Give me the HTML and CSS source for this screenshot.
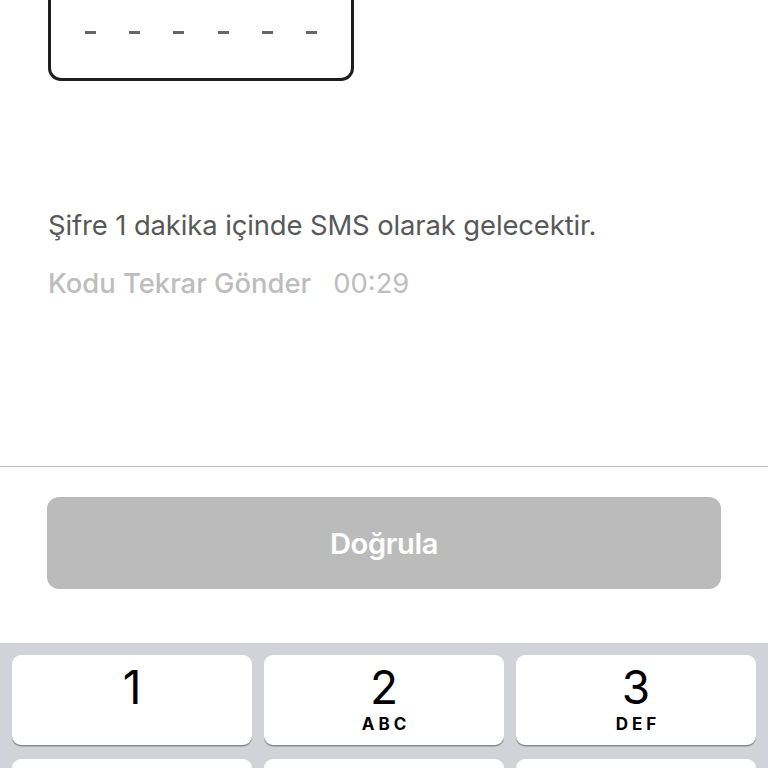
FILE: index.html
```html
<!DOCTYPE html>
<html lang="tr">
<head>
<meta charset="utf-8">
<link rel="stylesheet" href="styles.css">
</head>
<body>
<div class="page">
  <div class="otp-wrap">
    <div class="otp-box">
      <span class="dash"></span><span class="dash"></span><span class="dash"></span>
      <span class="dash"></span><span class="dash"></span><span class="dash"></span>
    </div>
  </div>
  <p class="info">Şifre 1 dakika içinde SMS olarak gelecektir.</p>
  <div class="resend">
    <span class="resend-link">Kodu Tekrar Gönder</span>
    <span class="timer">00:29</span>
  </div>
  <div class="spacer"></div>
  <div class="footer">
    <button class="verify">Doğrula</button>
  </div>
  <div class="keyboard">
    <div class="key"><span class="num">1</span><span class="letters"></span></div>
    <div class="key"><span class="num">2</span><span class="letters">ABC</span></div>
    <div class="key"><span class="num">3</span><span class="letters">DEF</span></div>
    <div class="key"></div>
    <div class="key"></div>
    <div class="key"></div>
  </div>
</div>
</body>
</html>
```

FILE: styles.css
```css
* { box-sizing: border-box; }
html, body {
  margin: 0;
  padding: 0;
  background: #fff;
  font-family: Inter, "Noto Sans", "Liberation Sans", sans-serif;
}
.page {
  width: 768px;
  height: 768px;
  overflow: hidden;
  display: flex;
  flex-direction: column;
}
.page > * { flex-shrink: 0; }
.otp-wrap {
  padding: 0 48px;
}
.otp-box {
  width: 306px;
  height: 98px;
  margin-top: -17px;
  border: 3px solid #1e1e1e;
  border-radius: 13px;
  display: flex;
  align-items: center;
  justify-content: space-between;
  padding: 0 34px 0 34px;
}
.dash {
  width: 11px;
  height: 3px;
  background: #666;
}
.info {
  margin: 129px 0 0 48px;
  font-size: 27.4px;
  line-height: 30px;
  color: #585858;
  letter-spacing: -0.1px;
}
.resend {
  margin: 28px 0 0 48px;
  display: flex;
  gap: 22px;
  font-size: 27.4px;
  line-height: 30px;
  color: #bdbdbd;
}
.resend-link { font-weight: 500; }
.timer { font-weight: 400; }
.spacer { height: 168px; }
.footer {
  border-top: 1px solid #bdbdbd;
  padding: 30px 47px 0 47px;
  height: 177px;
}
.verify {
  width: 674px;
  height: 92px;
  border: 0;
  border-radius: 12px;
  background: #bbbbbb;
  color: #fff;
  font-family: inherit;
  font-size: 29px;
  font-weight: 600;
  letter-spacing: -0.3px;
}
.keyboard {
  height: 125px;
  overflow: hidden;
  background: #d1d3d9;
  display: grid;
  grid-template-columns: repeat(3, 1fr);
  grid-auto-rows: 90px;
  column-gap: 12px;
  row-gap: 14px;
  padding: 12px 12px 0 12px;
}
.key {
  background: #fff;
  border-radius: 9px;
  box-shadow: 0 1.5px 0 #898a8d;
  display: flex;
  flex-direction: column;
  align-items: center;
  color: #000;
}
.num {
  font-size: 46px;
  font-weight: 400;
  line-height: 46px;
  margin-top: 9px;
}
.letters {
  font-size: 17px;
  font-weight: 700;
  letter-spacing: 4px;
  margin-right: -4px;
  line-height: 20px;
  margin-top: 4px;
}
```
